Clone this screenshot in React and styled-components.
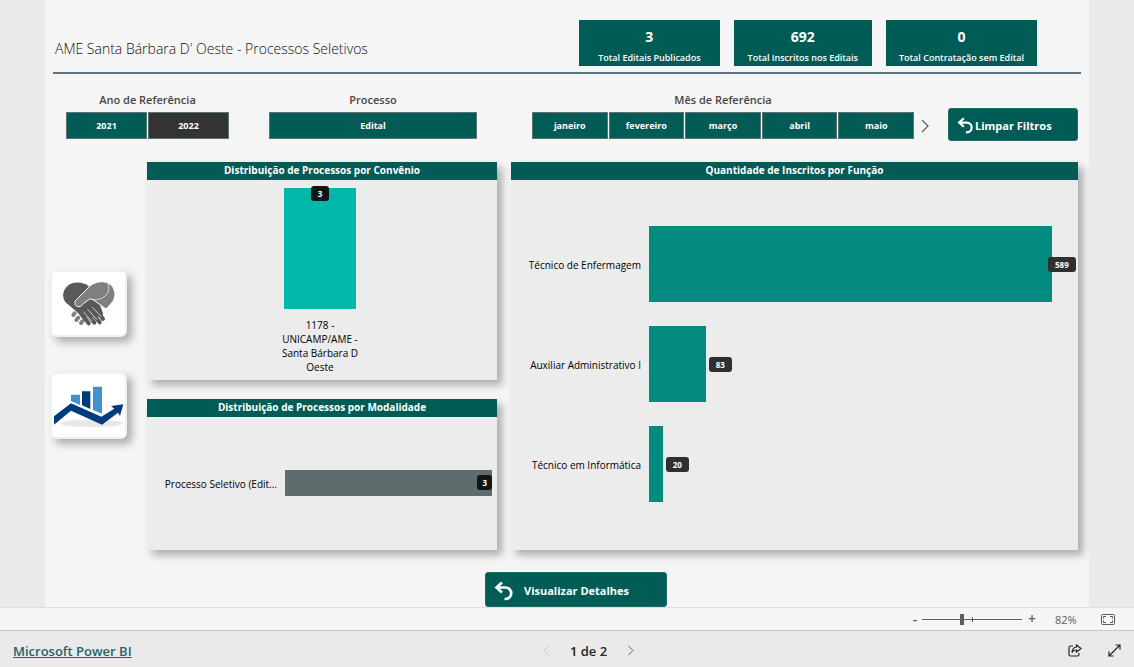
import React, { useState } from 'react'
import styled, { createGlobalStyle } from 'styled-components'

const EstilosGlobais = createGlobalStyle`
    * {
        box-sizing: border-box;
    }
    body {
        margin: 0;
        background-color: #eaeaea;
        font-family: "Open Sans", "Noto Sans", sans-serif;
        color: #252423;
    }
    button, input {
        font-family: inherit;
    }
    button {
        cursor: pointer;
    }
`

const Pagina = styled.div`
    display: flex;
    flex-direction: column;
    min-height: 100vh;
`

const Relatorio = styled.main`
    flex: 1;
    display: flex;
    flex-direction: column;
    margin: 0 45px;
    padding: 20px 8px 0;
    background-color: #f5f5f5;
`

const Cabecalho = styled.header`
    display: flex;
    justify-content: space-between;
    height: 54px;
    padding: 0 44px 0 2px;
    border-bottom: 2px solid #5c7486;
`

const Titulo = styled.h1`
    margin: 0;
    font-size: 14px;
    line-height: 58px;
    font-weight: 300;
    color: #111;
`

const Cartoes = styled.div`
    display: flex;
    gap: 14px;
`

const Cartao = styled.div`
    display: flex;
    flex-direction: column;
    align-items: center;
    height: 46px;
    padding: 7px ${props => props.$folga} 0;
    background-color: #015c55;
    color: #fff;
`

const CartaoValor = styled.strong`
    font-size: 14px;
    line-height: 20px;
    font-weight: 700;
`

const CartaoLegenda = styled.span`
    font-size: 9px;
    line-height: 22px;
    font-weight: 600;
    white-space: nowrap;
`

const Filtros = styled.section`
    display: grid;
    grid-template-columns: 163fr 230fr 435fr 130px;
    column-gap: 18px;
    padding: 18px 3px 0 13px;
    height: 88px;
`

const Filtro = styled.div`
    min-width: 0;
    padding-left: ${props => props.$recuo || '0'};
`

const FiltroTitulo = styled.h2`
    margin: 0;
    font-size: 11px;
    line-height: 16px;
    padding: 0 ${props => props.$comSeta ? '16px' : '0'} 4px 0;
    font-weight: 600;
    text-align: center;
    color: #484644;
`

const FiltroOpcoes = styled.div`
    display: flex;
    align-items: center;
    gap: 1px;
`

const Opcao = styled.button`
    flex: 1;
    height: 27px;
    padding: 0;
    border: 1px solid #5b7573;
    background-color: ${props => props.$ativa ? '#333' : '#015c55'};
    color: #fff;
    font-size: 9px;
    font-weight: 700;
`

const BotaoSeta = styled.button`
    display: flex;
    padding: 0 0 0 ${props => props.$recuo || '0'};
    border: 0;
    background: none;
    color: ${props => props.$apagada ? '#c8c6c4' : '#605e5c'};
`

const BotaoAcao = styled.button`
    display: flex;
    align-items: center;
    gap: ${props => props.$espaco};
    width: ${props => props.$largura};
    height: ${props => props.$altura};
    padding: 2px 8px 0;
    border: 1px solid #1c6d66;
    border-radius: 3px;
    background-color: #015c55;
    color: #fff;
    font-size: 11px;
    font-weight: 700;
    white-space: nowrap;
`

const AreaFiltroBotao = styled.div`
    padding-top: 16px;
`

const Conteudo = styled.section`
    display: grid;
    grid-template-columns: 80px 350fr 567fr;
    column-gap: 14px;
    height: 388px;
    padding-right: 3px;
`

const Navegacao = styled.nav`
    display: flex;
    flex-direction: column;
    gap: 35px;
    padding-top: 108px;
    margin-left: -3px;
`

const BotaoImagem = styled.button`
    display: flex;
    align-items: center;
    justify-content: center;
    width: 77px;
    height: 67px;
    padding: 0;
    border: 2px solid #f0f0f0;
    border-radius: 6px;
    background-color: #fff;
    box-shadow: 5px 5px 8px rgba(0, 0, 0, 0.3);
`

const Coluna = styled.div`
    display: flex;
    flex-direction: column;
    gap: 19px;
    min-width: 0;
`

const PainelContainer = styled.article`
    display: flex;
    flex-direction: column;
    flex: ${props => props.$peso};
    background-color: #ececec;
    box-shadow: 5px 5px 8px rgba(0, 0, 0, 0.3);
`

const PainelTitulo = styled.h2`
    margin: 0;
    height: 18px;
    background-color: #015c55;
    color: #fff;
    font-size: 10px;
    line-height: 16px;
    font-weight: 700;
    text-align: center;
`

const GraficoColuna = styled.div`
    display: flex;
    flex-direction: column;
    align-items: center;
    padding: 8px 4px 0 0;
`

const BarraVertical = styled.div`
    display: flex;
    justify-content: center;
    align-items: flex-start;
    width: 72px;
    height: 121px;
    background-color: #01b8aa;
`

const RotuloColuna = styled.span`
    width: 92px;
    margin-top: 9px;
    font-size: 10px;
    line-height: 14px;
    text-align: center;
    color: #000;
`

const GraficoBarras = styled.div`
    flex: 1;
    display: flex;
    flex-direction: column;
    justify-content: center;
    gap: 24px;
    padding-bottom: 2px;
`

const LinhaBarra = styled.div`
    display: grid;
    grid-template-columns: 130px 1fr;
    column-gap: 8px;
    align-items: center;
`

const RotuloBarra = styled.span`
    font-size: 10px;
    line-height: 16px;
    padding-top: 2px;
    text-align: right;
    white-space: nowrap;
    color: #000;
`

const Trilho = styled.div`
    display: flex;
    align-items: center;
    padding-right: ${props => props.$folga || '0'};
`

const Barra = styled.div`
    display: flex;
    align-items: center;
    justify-content: flex-end;
    height: ${props => props.$altura};
    background-color: ${props => props.$cor};
`

const Etiqueta = styled.span`
    flex: none;
    padding: 0 ${props => props.$compacta ? '5px' : '7px'};
    margin: ${props => props.$margem || '0'};
    border-radius: 3px;
    background-color: ${props => props.$escura ? '#111615' : '#2f2f2f'};
    color: #fff;
    font-size: 8px;
    line-height: 15px;
    font-weight: 700;
`

const Detalhes = styled.div`
    display: flex;
    justify-content: center;
    padding: 22px 0 0 18px;
`

const BarraZoom = styled.div`
    display: flex;
    align-items: center;
    justify-content: flex-end;
    height: 24px;
    padding-right: 19px;
    border-top: 1px solid #dedede;
    border-bottom: 1px solid #c8c8c8;
    background-color: #f5f5f5;
    color: #605e5c;
`

const BotaoZoom = styled.button`
    display: flex;
    align-items: center;
    justify-content: center;
    width: 14px;
    height: 18px;
    padding: 0;
    border: 0;
    background: none;
    color: #605e5c;
    font-size: 14px;
    line-height: 16px;
    font-weight: 600;
`

const ControleZoom = styled.input`
    appearance: none;
    width: 100px;
    height: 11px;
    margin: 0 3px 0 0;
    background:
        linear-gradient(#605e5c, #605e5c) center / 1px 5px no-repeat,
        linear-gradient(#605e5c, #605e5c) center / 100% 1px no-repeat;

    &::-webkit-slider-thumb {
        appearance: none;
        width: 4px;
        height: 11px;
        background-color: #605e5c;
    }
`

const ValorZoom = styled.output`
    width: 62px;
    padding-left: 16px;
    font-size: 11px;
`

const BotaoIcone = styled.button`
    display: flex;
    padding: 0;
    border: 0;
    background: none;
    color: ${props => props.$cor || '#252423'};
`

const Rodape = styled.footer`
    display: grid;
    grid-template-columns: 1fr auto 1fr;
    align-items: center;
    height: 36px;
    padding: 3px 13px 0;
    background-color: #eaeaea;
`

const LinkPowerBI = styled.a`
    font-size: 13px;
    font-weight: 600;
    color: #1f6566;
    justify-self: start;
`

const Paginacao = styled.div`
    display: flex;
    align-items: center;
    gap: 20px;
    padding-left: 43px;
    font-size: 13px;
    font-weight: 600;
    line-height: 18px;
`

const AcoesRodape = styled.div`
    display: flex;
    align-items: center;
    justify-content: flex-end;
    gap: 26px;
`

function IconeVoltar({ tamanho }) {
    return (
        <svg width={tamanho} height={tamanho} viewBox="0 0 20 20" fill="none" stroke="currentColor" strokeWidth="2.7" aria-hidden="true">
            <path d="M3 6.5H11.5a5.7 5.7 0 0 1 0 11.500H10.500" />
            <path d="M8 1.500L2.500 6.500L8 11.500" />
        </svg>
    )
}

function IconeSeta({ esquerda, largura = 9, altura = 14 }) {
    return (
        <svg width={largura} height={altura} viewBox="0 0 9 14" fill="none" stroke="currentColor" strokeWidth="1.2" aria-hidden="true">
            <path d={esquerda ? 'M8 1L2 7L8 13' : 'M1 1L7 7L1 13'} />
        </svg>
    )
}

function IconeMaos() {
    return (
        <svg width="54" height="46" viewBox="66 66 162 138" aria-hidden="true">
            <g stroke="#7f7f7f" strokeLinecap="round" strokeWidth="12">
                <path d="M100 168l4 -5M109 183l6 -7M123 192l4 -5" />
            </g>
            <path fill="#595959" d="M146 82C130 68 99 67 83 80C66 95 65 118 79 132L112 160L142 174L172 174L190 166L172 115Z" />
            <g stroke="#595959" strokeLinecap="round" strokeWidth="12" fill="none">
                <path d="M114 152L146 193M128 150L163 191M142 145L179 190M156 135L189 180" />
            </g>
            <path d="M130 158L155 186M143 151L171 182M156 144L184 173" stroke="#fff" strokeWidth="2" />
            <path
                fill="#7f7f7f"
                stroke="#fff"
                strokeWidth="3"
                d="M150 81C165 67 198 62 214 79C230 96 227 119 214 133L198 150L158 121L149 120L130 134C124 142 116 146 109 141C102 135 104 127 110 121Z"
            />
            <path d="M204 74C213 100 194 125 157 122" fill="none" stroke="#fff" strokeWidth="2" />
        </svg>
    )
}

function IconeCrescimento() {
    return (
        <svg width="70" height="42" viewBox="42 370 210 126" aria-hidden="true">
            <ellipse cx="155" cy="485" rx="95" ry="11" fill="#e8e8e8" />
            <path fill="#4191cc" d="M93 399H120V430L93 418ZM159 375H186V456L159 445Z" />
            <path fill="#003c7c" d="M126 389H151V442L126 431Z" />
            <path fill="#003c7c" d="M42 489V464L93 425L184 465L223 441L213 433L250 428L240 463L234 453L186 489L93 447Z" />
        </svg>
    )
}

function IconeAjustar() {
    return (
        <svg width="14" height="11" viewBox="0 0 14 11" fill="none" stroke="currentColor" aria-hidden="true">
            <rect x="0.5" y="0.5" width="13" height="10" rx="1" />
            <path d="M5 2.5H2.5V4.5M2.5 6.5V8.5H5M9 2.5H11.5V4.5M11.5 6.5V8.5H9" />
        </svg>
    )
}

function IconeCompartilhar() {
    return (
        <svg width="14" height="13" viewBox="0 0 14 13" fill="none" stroke="currentColor" strokeWidth="1.2" aria-hidden="true">
            <path d="M5 2H2.5Q1 2 1 3.5V10.5Q1 12 2.5 12H9.5Q11 12 11 10.5V9" />
            <path d="M8.5 1L13 4.5L8.5 8V6Q5.5 6 4 8.5Q4.5 3.5 8.5 3Z" />
        </svg>
    )
}

function IconeExpandir() {
    return (
        <svg width="13" height="13" viewBox="0 0 13 13" fill="none" stroke="currentColor" strokeWidth="1.2" aria-hidden="true">
            <path d="M1 12L12 1M7.5 1H12V5.5M1 7.5V12H5.5" />
        </svg>
    )
}

function Painel({ titulo, peso = 1, children }) {
    return (
        <PainelContainer $peso={peso}>
            <PainelTitulo>{titulo}</PainelTitulo>
            {children}
        </PainelContainer>
    )
}

const cartoes = [
    { valor: '3', legenda: 'Total Editais Publicados', folga: '19px' },
    { valor: '692', legenda: 'Total Inscritos nos Editais', folga: '14px' },
    { valor: '0', legenda: 'Total Contratação sem Edital', folga: '13px' },
]

const anos = ['2021', '2022']
const meses = ['janeiro', 'fevereiro', 'março', 'abril', 'maio']

const funcoes = [
    { nome: 'Técnico de Enfermagem', total: 589 },
    { nome: 'Auxiliar Administrativo I', total: 83 },
    { nome: 'Técnico em Informática', total: 20 },
]

// valor que ocuparia toda a largura do gráfico de funções
const escalaMaxima = 627

export default function App() {
    const [ano, setAno] = useState('2022')
    const [mes, setMes] = useState(null)
    const [zoom, setZoom] = useState(82)

    return (
        <>
            <EstilosGlobais />
            <Pagina>
                <Relatorio>
                    <Cabecalho>
                        <Titulo>AME Santa Bárbara D' Oeste - Processos Seletivos</Titulo>
                        <Cartoes>
                            {cartoes.map(cartao => (
                                <Cartao key={cartao.legenda} $folga={cartao.folga}>
                                    <CartaoValor>{cartao.valor}</CartaoValor>
                                    <CartaoLegenda>{cartao.legenda}</CartaoLegenda>
                                </Cartao>
                            ))}
                        </Cartoes>
                    </Cabecalho>

                    <Filtros>
                        <Filtro>
                            <FiltroTitulo>Ano de Referência</FiltroTitulo>
                            <FiltroOpcoes>
                                {anos.map(item => (
                                    <Opcao key={item} $ativa={item === ano} onClick={() => setAno(item)}>{item}</Opcao>
                                ))}
                            </FiltroOpcoes>
                        </Filtro>
                        <Filtro $recuo="22px">
                            <FiltroTitulo>Processo</FiltroTitulo>
                            <FiltroOpcoes>
                                <Opcao>Edital</Opcao>
                            </FiltroOpcoes>
                        </Filtro>
                        <Filtro $recuo="37px">
                            <FiltroTitulo $comSeta>Mês de Referência</FiltroTitulo>
                            <FiltroOpcoes>
                                {meses.map(item => (
                                    <Opcao key={item} $ativa={item === mes} onClick={() => setMes(item)}>{item}</Opcao>
                                ))}
                                <BotaoSeta $recuo="6px" aria-label="Próximos meses">
                                    <IconeSeta />
                                </BotaoSeta>
                            </FiltroOpcoes>
                        </Filtro>
                        <AreaFiltroBotao>
                            <BotaoAcao $largura="100%" $altura="33px" $espaco="1px">
                                <IconeVoltar tamanho={17} />
                                Limpar Filtros
                            </BotaoAcao>
                        </AreaFiltroBotao>
                    </Filtros>

                    <Conteudo>
                        <Navegacao>
                            <BotaoImagem aria-label="Convênios"><IconeMaos /></BotaoImagem>
                            <BotaoImagem aria-label="Indicadores"><IconeCrescimento /></BotaoImagem>
                        </Navegacao>
                        <Coluna>
                            <Painel titulo="Distribuição de Processos por Convênio" peso={218}>
                                <GraficoColuna>
                                    <BarraVertical>
                                        <Etiqueta $escura $margem="-2px 0 0">3</Etiqueta>
                                    </BarraVertical>
                                    <RotuloColuna>1178 - UNICAMP/AME - Santa Bárbara D Oeste</RotuloColuna>
                                </GraficoColuna>
                            </Painel>
                            <Painel titulo="Distribuição de Processos por Modalidade" peso={151}>
                                <GraficoBarras>
                                    <LinhaBarra>
                                        <RotuloBarra>Processo Seletivo (Edit...</RotuloBarra>
                                        <Trilho $folga="5px">
                                            <Barra $altura="26px" $cor="#5f6b6d" style={{ width: '100%' }}>
                                                <Etiqueta $escura $compacta>3</Etiqueta>
                                            </Barra>
                                        </Trilho>
                                    </LinhaBarra>
                                </GraficoBarras>
                            </Painel>
                        </Coluna>
                        <Coluna>
                            <Painel titulo="Quantidade de Inscritos por Função">
                                <GraficoBarras>
                                    {funcoes.map(funcao => (
                                        <LinhaBarra key={funcao.nome}>
                                            <RotuloBarra>{funcao.nome}</RotuloBarra>
                                            <Trilho>
                                                <Barra
                                                    $altura="76px"
                                                    $cor="#038b80"
                                                    style={{ width: `${(funcao.total / escalaMaxima) * 100}%` }}
                                                />
                                                <Etiqueta $margem={funcao.total > 500 ? '0 0 0 -4px' : '0 0 0 3px'}>{funcao.total}</Etiqueta>
                                            </Trilho>
                                        </LinhaBarra>
                                    ))}
                                </GraficoBarras>
                            </Painel>
                        </Coluna>
                    </Conteudo>

                    <Detalhes>
                        <BotaoAcao $largura="182px" $altura="35px" $espaco="10px">
                            <IconeVoltar tamanho={20} />
                            Visualizar Detalhes
                        </BotaoAcao>
                    </Detalhes>
                </Relatorio>

                <BarraZoom>
                    <BotaoZoom aria-label="Diminuir zoom" onClick={() => setZoom(zoom - 1)}>-</BotaoZoom>
                    <ControleZoom
                        type="range"
                        aria-label="Zoom"
                        min="10"
                        max="190"
                        value={zoom}
                        onChange={evento => setZoom(Number(evento.target.value))}
                    />
                    <BotaoZoom aria-label="Aumentar zoom" onClick={() => setZoom(zoom + 1)}>+</BotaoZoom>
                    <ValorZoom>{zoom}%</ValorZoom>
                    <BotaoIcone $cor="#605e5c" aria-label="Ajustar à página"><IconeAjustar /></BotaoIcone>
                </BarraZoom>

                <Rodape>
                    <LinkPowerBI href="#">Microsoft Power BI</LinkPowerBI>
                    <Paginacao>
                        <BotaoSeta $apagada aria-label="Página anterior"><IconeSeta esquerda largura={8} altura={11} /></BotaoSeta>
                        <span>1 de 2</span>
                        <BotaoSeta aria-label="Próxima página"><IconeSeta largura={8} altura={11} /></BotaoSeta>
                    </Paginacao>
                    <AcoesRodape>
                        <BotaoIcone aria-label="Compartilhar"><IconeCompartilhar /></BotaoIcone>
                        <BotaoIcone aria-label="Tela cheia"><IconeExpandir /></BotaoIcone>
                    </AcoesRodape>
                </Rodape>
            </Pagina>
        </>
    )
}
